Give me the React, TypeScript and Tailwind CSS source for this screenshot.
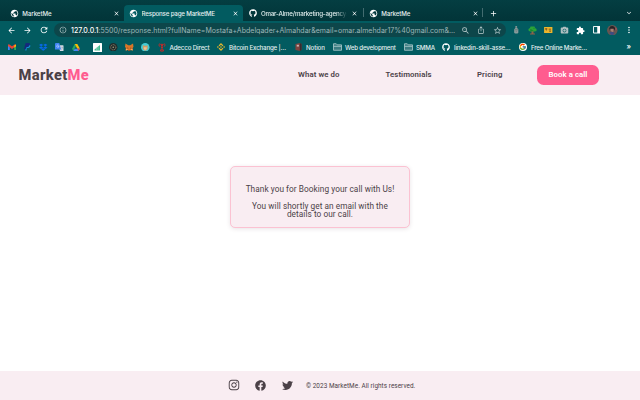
import React from "react";
import { FaGithub, FaFacebook, FaTwitter, FaInstagram, FaDropbox } from "react-icons/fa";
import { SiBinance } from "react-icons/si";
import { FcGoogle } from "react-icons/fc";
import { MdPublic, MdInfoOutline, MdArrowBack, MdArrowForward, MdRefresh, MdZoomOut, MdIosShare, MdStarBorder, MdClose, MdAdd, MdExpandMore, MdMoreVert, MdPhotoCamera, MdExtension } from "react-icons/md";

type Kids = { children?: React.ReactNode };

function Slot({ children }: Kids) {
  return <span className="flex w-4 shrink-0 items-center justify-center">{children}</span>;
}

function Tab({ title, icon, active, spacing }: { title: string; icon: React.ReactNode; active?: boolean; spacing: string }) {
  return (
    <div className={`flex h-full w-[119.3px] shrink-0 items-center pl-[5px] ${active ? "rounded-t-[4px] bg-[#025b60]" : ""}`}>
      <span className="flex w-[9px] shrink-0 justify-center">{icon}</span>
      <span className={`ml-[3.6px] w-[86px] shrink-0 overflow-hidden text-[6.2px] leading-[9px] font-medium whitespace-nowrap text-[#e3efef] ${spacing}`}>{title}</span>
      <MdClose className="ml-[4.4px] size-[7px] shrink-0 text-white" />
    </div>
  );
}

function Folder() {
  return (
    <svg viewBox="0 0 18 16" className="h-[8px] w-[9px]" fill="none" stroke="#a9c6c9" strokeWidth="1.7">
      <path fill="#3b7c81" d="M1 14.5V1.5h5.5l2 2.200H17v10.800z" />
      <path d="M1 6.700h16" />
    </svg>
  );
}

function Mark({ icon, text, width, spacing }: { icon: React.ReactNode; text: string; width: string; spacing: string }) {
  return (
    <div className={`flex shrink-0 items-center ${width}`}>
      <span className="flex w-4 shrink-0 justify-center">{icon}</span>
      <span className={`text-[6.2px] leading-[9px] font-medium whitespace-nowrap text-[#e3efef] ${spacing}`}>{text}</span>
    </div>
  );
}

function Gmail() {
  return (
    <svg viewBox="0 0 18 14" className="h-[6.5px] w-[8px]">
      <path fill="#4285f4" d="M0 2h4v12H1a1 1 0 0 1-1-1z" />
      <path fill="#34a853" d="M14 2h4v11a1 1 0 0 1-1 1h-3z" />
      <path fill="#ea4335" d="M0 2C0 0 2 0 3 .6L9 5l6-4.400C16 0 18 0 18 2v2L9 11 0 4z" />
      <path fill="#fbbc04" d="M14 3l4-2v4l-4 3z" />
    </svg>
  );
}

function Paypal() {
  return (
    <svg viewBox="0 0 16 18" className="h-[7.5px] w-[6.5px]">
      <path fill="#15297c" d="M4 0h7c4 0 5 3 3 6s-4 4-8 4l-1 5H0z" />
      <path fill="#168fd6" d="M14 4c3 2 2 8-5 8H7l-1 6H3l1-4h1l1-4c4 0 7-1 8-6z" />
    </svg>
  );
}

function Translate() {
  return (
    <svg viewBox="0 0 18 18" className="size-[8.5px]">
      <path fill="#d5dbe5" d="M7 5h10a1 1 0 0 1 1 1v11a1 1 0 0 1-1 1h-6z" />
      <path fill="#4285f4" d="M1 0h8l4 14H1a1 1 0 0 1-1-1V1z" />
      <path fill="none" stroke="#dce8ff" strokeWidth="1.2" d="M8 5A2.500 2.500 0 1 0 8.500 7.500H6" />
      <path fill="none" stroke="#8595aa" strokeWidth="1" d="M12 9h5m-1 0c0 3-2 4-3 5" />
    </svg>
  );
}

function Drive() {
  return (
    <svg viewBox="0 0 18 16" className="h-[7px] w-[8px]">
      <path fill="#22a565" d="M6 0 0 11l3 5L9 5z" />
      <path fill="#fbbc04" d="M6 0h6l6 11h-6z" />
      <path fill="#4285f4" d="m3 16 3-5h12l-3 5z" />
      <path fill="#ea4335" d="M12 11h6l-3 5z" />
    </svg>
  );
}

function Chart() {
  return (
    <svg viewBox="0 0 18 18" className="size-[9px]">
      <rect width="18" height="18" rx="1" fill="#fff" />
      <path fill="#43bd91" d="M3 13 14 4v11H3z" />
      <path stroke="#b9e6d3" d="M7 9v6m3-8v8" />
    </svg>
  );
}

function Coin() {
  return (
    <svg viewBox="0 0 18 18" className="size-[8.5px]">
      <circle cx="9" cy="9" r="9" fill="#222b2b" />
      <circle cx="9" cy="9" r="5.500" fill="none" stroke="#a39d7a" strokeWidth="1.700" strokeDasharray="2.500 1.500" />
      <circle cx="9" cy="9" r="1.700" fill="#a39d7a" />
    </svg>
  );
}

function Fox() {
  return (
    <svg viewBox="0 0 18 18" className="size-[8.5px]">
      <path fill="#d87628" d="m1 1 6 4h4l6-4 1 7-2 3 1 5-5-1-2 2H8l-2-2-5 1 1-5-2-3z" />
      <path fill="#8b4c29" d="m5 9 3 2-3 1zm8 0v3l-3-1zM7 15h4v2H7z" />
      <path fill="#f5ad67" d="m2 12 4 1-1 2-3 1zm14 0-4 1 1 2 3 1z" />
    </svg>
  );
}

function Bunny() {
  return (
    <svg viewBox="0 0 18 18" className="size-[8.5px]">
      <circle cx="9" cy="9" r="9" fill="#45cbd5" />
      <path fill="#d49b61" d="m4 4 3 2h4l3-2v8l-3 4H7l-3-4z" />
      <path fill="#e7c39a" d="M6 9h6v4l-3 2-3-2z" />
    </svg>
  );
}

function Tower() {
  return (
    <svg viewBox="0 0 16 20" className="h-[9px] w-[8px]" fill="none" stroke="#d72424" strokeWidth="2">
      <path d="M3 1C1 3 1 6 3 8M13 1c2 2 2 5 0 7M5 3h6L8 7zM8 6v8M6 10h4M5 15h6v3H5z" />
    </svg>
  );
}

function Notion() {
  return (
    <svg viewBox="0 0 16 18" className="h-[8px] w-[7px]">
      <path fill="#7e4440" d="M1 2 11 0l4 2v14l-4 2L1 16z" />
      <path fill="#372c31" d="M11 0l4 2v14l-4 2z" />
      <path fill="#c9b5b0" d="M4 4h5v4H4z" />
    </svg>
  );
}

function Tree() {
  return (
    <svg viewBox="0 0 18 18" className="size-[9px]">
      <path fill="#906247" d="M7 9h4v6h3v2H4v-2h3z" />
      <path fill="#2ba438" d="M5 1h8l1 3 3 2v4l-4 1H4l-3-2V6l3-2z" />
      <path fill="#1b8434" d="m4 6 4 1 3 3H5zm7-3 3 3h-3z" />
    </svg>
  );
}

function Avatar() {
  return (
    <svg viewBox="0 0 22 22" className="size-[10.5px]">
      <circle cx="11" cy="11" r="11" fill="#685650" />
      <path fill="#292226" d="M5 7c0-7 12-7 12 1l-2 4H6z" />
      <path fill="#a88072" d="M7 8h7v5l-3 2-4-3z" />
      <path fill="#404b80" d="M5 15l5-1 6 2-3 5H8z" />
      <path fill="#94505a" d="M17 5l4 2v3l-3 1z" />
    </svg>
  );
}

function BrowserChrome() {
  const globe = <MdPublic className="size-[9px] text-white" />;
  return (
    <div className="flex h-[55px] shrink-0 flex-col bg-[#025b60] font-['Inter','Liberation_Sans',sans-serif]">
      <div className="flex h-[21px] shrink-0 items-stretch bg-linear-to-b from-[#043e42] to-[#023438] pt-[5px] pl-[4.7px]">
        <Tab title="MarketMe" icon={globe} spacing="tracking-[-0.1px]" />
        <Tab title="Response page MarketME" icon={globe} active spacing="tracking-[-0.19px]" />
        <Tab title="Omar-Alme/marketing-agency:" icon={<FaGithub className="size-[8px] text-white" />} spacing="tracking-[-0.19px] [mask-image:linear-gradient(90deg,#000_88%,transparent)]" />
        <div className="mt-[3px] h-[9px] w-px shrink-0 bg-[#426c70]" />
        <Tab title="MarketMe" icon={globe} spacing="tracking-[-0.1px]" />
        <div className="mt-[3px] -ml-px h-[9px] w-px shrink-0 bg-[#426c70]" />
        <MdAdd className="mt-[4px] ml-[6px] size-[9px] text-white" />
        <MdExpandMore className="mt-[4px] mr-[7px] ml-auto size-[8px] text-white" />
      </div>
      <div className="flex h-[18px] shrink-0 items-center pl-[3.5px] text-white">
        <Slot><MdArrowBack className="size-[9px]" /></Slot>
        <Slot><MdArrowForward className="size-[9px]" /></Slot>
        <Slot><MdRefresh className="size-[10px]" /></Slot>
        <div className="ml-[2.5px] flex h-[14.5px] w-[452px] shrink-0 items-center rounded-full bg-[#0d464a] pl-[5px] text-[#bfd0d1]">
          <MdInfoOutline className="size-[8px] shrink-0" />
          <span className="ml-[4px] w-[386px] shrink-0 pt-px text-[7px] leading-[10px] tracking-[0.015px] whitespace-nowrap text-[#9db6b8]">
            <span className="font-medium text-white">127.0.0.1</span>:5500/response.html?fullName=Mostafa+Abdelqader+Almahdar&amp;email=omar.almehdar17%40gmail.com&amp;…
          </span>
          <Slot><MdZoomOut className="size-[9px]" /></Slot>
          <Slot><MdIosShare className="size-[8px]" /></Slot>
          <Slot><MdStarBorder className="size-[9px]" /></Slot>
        </div>
        <div className="ml-[2.5px] flex items-center">
          <Slot>
            <svg viewBox="0 0 10 18" className="h-[7.5px] w-[4.5px]"><path fill="#889b9b" d="M3 0h4v5l3 3v8l-2 2H2l-2-2V8l3-3z" /><path stroke="#596b6d" strokeWidth="1.500" d="M1 9h8M3 3h4M4 13h2" /></svg>
          </Slot>
          <Slot><Tree /></Slot>
          <Slot>
            <svg viewBox="0 0 18 13" className="h-[6px] w-[8.5px]"><path fill="#edb62c" d="M0 0h18v13H0z" /><path fill="#ad7525" d="M2 2h5v4H2zM10 3h5v4h-5z" /><path fill="#413b25" d="M4 3h1v5H4zM11 8h4v2h-4z" /></svg>
          </Slot>
          <Slot><MdPhotoCamera className="size-[9px] text-[#b1bfc1]" /></Slot>
          <Slot><MdExtension className="size-[9px]" /></Slot>
          <Slot>
            <svg viewBox="0 0 16 16" className="size-[7.5px]"><path fill="none" stroke="#fff" strokeWidth="2" d="M1 1h14v14H1z" /><path fill="#fff" d="M9 1h6v14H9z" /></svg>
          </Slot>
          <Slot><Avatar /></Slot>
          <Slot><MdMoreVert className="size-[10px]" /></Slot>
        </div>
      </div>
      <div className="flex h-[16px] shrink-0 items-center pl-[3.5px]">
        <Slot><Gmail /></Slot>
        <Slot><Paypal /></Slot>
        <Slot><FaDropbox className="size-[8.5px] text-[#0869e8]" /></Slot>
        <Slot><Translate /></Slot>
        <Slot><Drive /></Slot>
        <span className="w-[6px] shrink-0" />
        <Slot><Chart /></Slot>
        <Slot><Coin /></Slot>
        <Slot><Fox /></Slot>
        <Slot><Bunny /></Slot>
        <Mark icon={<Tower />} text="Adecco Direct" width="w-[59.5px]" spacing="tracking-[-0.15px]" />
        <Mark icon={<SiBinance className="size-[8px] text-[#e9b929]" />} text="Bitcoin Exchange |…" width="w-[77px]" spacing="tracking-[-0.18px]" />
        <Mark icon={<Notion />} text="Notion" width="w-[39px]" spacing="tracking-[-0.12px]" />
        <Mark icon={<Folder />} text="Web development" width="w-[71px]" spacing="tracking-[-0.18px]" />
        <Mark icon={<Folder />} text="SMMA" width="w-[38px]" spacing="tracking-[-0.2px]" />
        <Mark icon={<FaGithub className="size-[8px] text-white" />} text="linkedin-skill-asse…" width="w-[77px]" spacing="tracking-[-0.15px]" />
        <Mark icon={<span className="rounded-full bg-white p-[0.5px]"><FcGoogle className="size-[7.5px]" /></span>} text="Free Online Marke…" width="w-[77px]" spacing="tracking-[-0.2px]" />
        <span className="mr-[9px] ml-auto text-[7.5px] leading-[10px] font-medium text-white">»</span>
      </div>
    </div>
  );
}

export default function App() {
  return (
    <div className="flex h-[400px] w-[640px] flex-col overflow-hidden bg-white font-['Roboto','Liberation_Sans',sans-serif] text-[#4b4147]">
      <BrowserChrome />
      <header className="flex h-[39.5px] shrink-0 items-center bg-[#f9edf2] pl-[18.5px] text-[7.8px] font-semibold">
        <div className="w-[279.5px] pt-[2px] text-[14.7px] leading-none font-extrabold tracking-[0.36px]">Market<span className="text-[#ff5c8f]">Me</span></div>
        <a className="w-[87.5px] pt-px tracking-[0.09px]">What we do</a>
        <a className="w-[91.5px] pt-px tracking-[0.09px]">Testimonials</a>
        <a className="w-[60px] pt-px tracking-[0.1px]">Pricing</a>
        <button className="h-[19.5px] w-[62px] rounded-[6.5px] bg-[#ff5c8f] pt-px text-center leading-none tracking-[0.06px] text-white">Book a call</button>
      </header>
      <main className="flex flex-1 flex-col items-center pt-[71.8px]">
        <section className="flex h-[61.4px] w-[180px] flex-col items-center rounded-[5px] border border-[#fbc2d2] bg-[#f9edf2] pt-[17.7px] text-center text-[8.25px] leading-[8px] shadow-[0_1px_4px_rgba(80,40,60,0.13)]">
          <p className="tracking-[0.06px] whitespace-nowrap">Thank you for Booking your call with Us!</p>
          <p className="mt-[9px] tracking-[0.06px] whitespace-nowrap">You will shortly get an email with the<br />details to our call.</p>
        </section>
      </main>
      <footer className="flex h-[29.5px] shrink-0 items-center bg-[#f9edf2] pl-[228px]">
        <FaInstagram className="size-[12px]" />
        <FaFacebook className="ml-[14.5px] size-[11px]" />
        <FaTwitter className="ml-[16px] size-[11px]" />
        <p className="ml-[13.5px] pt-[1.5px] text-[6.4px] leading-[9px] tracking-[0.05px] whitespace-nowrap">© 2023 MarketMe. All rights reserved.</p>
      </footer>
    </div>
  );
}
